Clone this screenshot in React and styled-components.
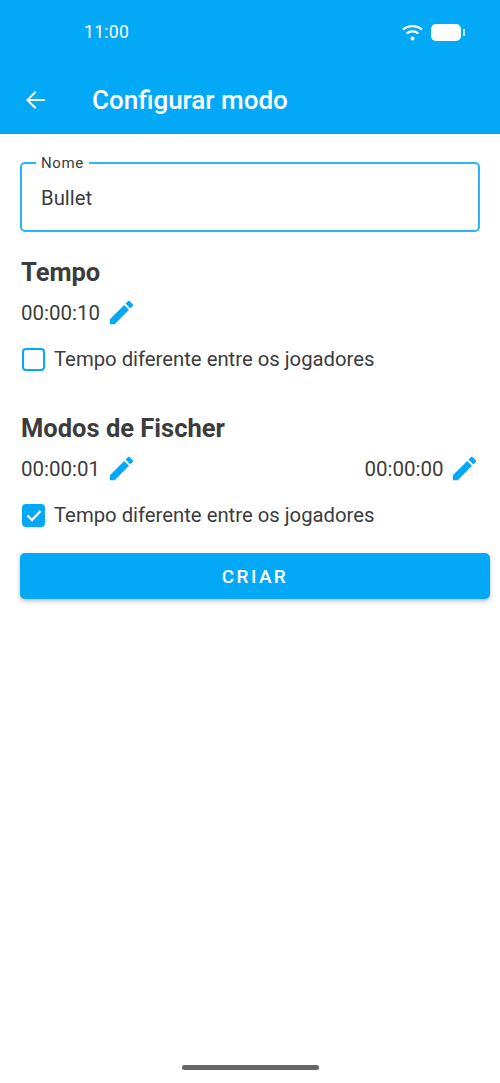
import styled, { createGlobalStyle } from "styled-components";

const GlobalStyle = createGlobalStyle`
  html, body {
    margin: 0;
    padding: 0;
    background: #fff;
  }
  * { box-sizing: border-box; }
`;

const Screen = styled.div`
  width: 500px;
  height: 1083px;
  position: relative;
  overflow: hidden;
  background: #fff;
  font-family: Roboto, "Liberation Sans", sans-serif;
  color: #3c3c3c;
`;

const Header = styled.header`
  height: 134px;
  background: #03a9f6;
  color: #fff;
`;

const StatusBar = styled.div`
  height: 66px;
  display: flex;
  align-items: center;
  justify-content: space-between;
  padding: 0 39px 2px 84px;
`;

const Clock = styled.span`
  font-size: 17.5px;
  letter-spacing: 0.3px;
`;

const StatusIcons = styled.div`
  display: flex;
  align-items: center;
  gap: 8px;
`;

const Battery = styled.div`
  width: 30px;
  height: 17px;
  border-radius: 5px;
  background: #fff;
  position: relative;
  &::after {
    content: "";
    position: absolute;
    left: 32px;
    top: 5px;
    width: 1.5px;
    height: 7px;
    background: rgba(255, 255, 255, 0.75);
  }
`;

const Toolbar = styled.div`
  height: 68px;
  display: flex;
  align-items: center;
  padding: 0 0 0 23px;
`;

const BackButton = styled.button`
  border: 0;
  padding: 0;
  background: none;
  display: flex;
  width: 24px;
  height: 24px;
  margin-right: 45px;
`;

const Title = styled.h1`
  margin: 0;
  font-size: 26px;
  font-weight: 500;
`;

const Content = styled.main`
  padding: 28px 10px 0 20px;
`;

const Field = styled.div`
  width: 460px;
  height: 70px;
  border: 2px solid #29b6f6;
  border-radius: 5px;
  position: relative;
  display: flex;
  align-items: center;
  padding: 1px 0 0 19px;
  font-size: 20.3px;
`;

const FieldLabel = styled.label`
  position: absolute;
  left: 14px;
  top: -9px;
  padding: 0 5px;
  background: #fff;
  font-size: 15px;
  line-height: 16px;
  letter-spacing: 0.6px;
`;

const Section = styled.section`
  margin-top: ${(p) => p.$top}px;
  padding-left: 1px;
`;

const SectionTitle = styled.h2`
  margin: 0;
  font-size: 25.5px;
  line-height: 28px;
  font-weight: 700;
`;

const TimeRow = styled.div`
  display: flex;
  justify-content: space-between;
  padding-right: 10px;
  margin-top: 12px;
`;

const TimeValue = styled.div`
  display: flex;
  align-items: center;
  gap: 5.5px;
  height: 30px;
  font-size: 20.5px;
`;

const Pencil = styled.svg`
  width: 31px;
  height: 31px;
  fill: #03a9f6;
  margin-top: -2px;
`;

const CheckRow = styled.label`
  display: flex;
  align-items: center;
  gap: 9px;
  height: 28px;
  margin-top: 17px;
  padding-left: 1px;
  font-size: 20.3px;
`;

const CheckBox = styled.span`
  width: 23px;
  height: 23px;
  border-radius: 4px;
  border: 2.5px solid #03a9f6;
  background: ${(p) => (p.$checked ? "#03a9f6" : "#fff")};
  display: flex;
  align-items: center;
  justify-content: center;
`;

const CreateButton = styled.button`
  display: block;
  width: 470px;
  height: 46px;
  margin-top: 24px;
  border: 0;
  border-radius: 5px;
  background: #03a9f6;
  color: #fff;
  font-family: inherit;
  font-size: 19px;
  font-weight: 500;
  letter-spacing: 2.4px;
  box-shadow: 0 2px 4px rgba(0, 0, 0, 0.28);
`;

const HomeBar = styled.div`
  position: absolute;
  left: 182px;
  bottom: 13px;
  width: 137px;
  height: 5px;
  border-radius: 3px;
  background: #666;
`;

const EditIcon = () => (
  <Pencil viewBox="0 0 24 24">
    <path d="M3 17.25V21h3.75L17.81 9.94l-3.75-3.75L3 17.25zM20.71 7.04c.39-.39.39-1.02 0-1.41l-2.34-2.34c-.39-.39-1.02-.39-1.41 0l-1.83 1.83 3.75 3.75 1.83-1.83z" />
  </Pencil>
);

const Time = ({ value }) => (
  <TimeValue>
    {value}
    <EditIcon />
  </TimeValue>
);

const App = () => {
  return (
    <Screen>
      <GlobalStyle />
      <Header>
        <StatusBar>
          <Clock>11:00</Clock>
          <StatusIcons>
            <svg width="21" height="17" viewBox="0 0 21 17" fill="none" stroke="#fff" strokeWidth="2.2">
              <path d="M1 5.6C6.4 1 14.6 1 20 5.6" />
              <path d="M4.6 9.4c3.4-2.8 8.4-2.8 11.8 0" />
              <circle cx="10.5" cy="14.6" r="2" fill="#fff" stroke="none" />
            </svg>
            <Battery />
          </StatusIcons>
        </StatusBar>
        <Toolbar>
          <BackButton>
            <svg width="24" height="24" viewBox="0 0 24 24" fill="#fff">
              <path d="M22 11H6.8l6.6-6.6L12 3l-9 9 9 9 1.4-1.4L6.8 13H22v-2z" />
            </svg>
          </BackButton>
          <Title>Configurar modo</Title>
        </Toolbar>
      </Header>
      <Content>
        <Field>
          <FieldLabel>Nome</FieldLabel>
          Bullet
        </Field>
        <Section $top={26}>
          <SectionTitle>Tempo</SectionTitle>
          <TimeRow>
            <Time value="00:00:10" />
          </TimeRow>
          <CheckRow>
            <CheckBox />
            Tempo diferente entre os jogadores
          </CheckRow>
        </Section>
        <Section $top={41}>
          <SectionTitle>Modos de Fischer</SectionTitle>
          <TimeRow>
            <Time value="00:00:01" />
            <Time value="00:00:00" />
          </TimeRow>
          <CheckRow>
            <CheckBox $checked>
              <svg width="18" height="18" viewBox="0 0 18 18" fill="none" stroke="#fff" strokeWidth="2.4">
                <path d="M2.5 9.5l4.5 4.5L15.5 5" />
              </svg>
            </CheckBox>
            Tempo diferente entre os jogadores
          </CheckRow>
        </Section>
        <CreateButton>CRIAR</CreateButton>
      </Content>
      <HomeBar />
    </Screen>
  );
};

export default App;
